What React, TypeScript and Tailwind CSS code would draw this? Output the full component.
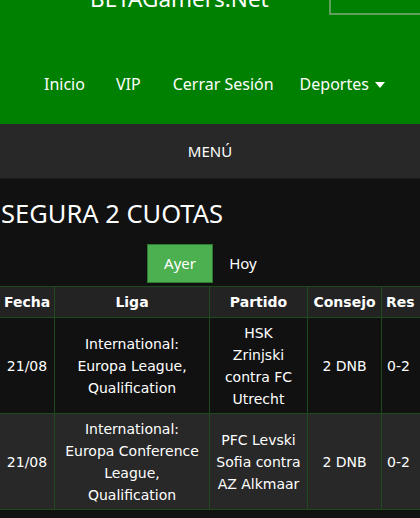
import React from "react";

const rows = [
  {
    fecha: "21/08",
    liga: ["International:", "Europa League,", "Qualification"],
    partido: ["HSK", "Zrinjski", "contra FC", "Utrecht"],
    consejo: "2 DNB",
    res: "0-2",
    bg: "bg-[#111111]",
  },
  {
    fecha: "21/08",
    liga: ["International:", "Europa Conference", "League,", "Qualification"],
    partido: ["PFC Levski", "Sofia contra", "AZ Alkmaar"],
    consejo: "2 DNB",
    res: "0-2",
    bg: "bg-[#282828]",
  },
];

export default function App() {
  const seg = { fontFamily: "'Noto Sans', 'Open Sans', sans-serif" };
  const tab = { fontFamily: "'DejaVu Sans', Verdana, sans-serif" };
  return (
    <div className="w-[420px] h-[518px] overflow-hidden bg-[#111111] text-white" style={seg}>
      <div className="bg-[#008000] h-[124px] flex flex-col">
        <div className="flex items-end h-[10px] overflow-visible">
          <div className="pl-[90px] text-[22.5px] leading-[30px] -mb-[4px] whitespace-nowrap">BETAGamers.Net</div>
          <div className="ml-auto w-[91px] h-[30px] -mb-[5px] border-2 border-[#5e9f5e] border-r-0" />
        </div>
        <div className="flex justify-start mt-[63px] text-[16px] leading-[22px] pl-[28px]">
          <span className="px-[16px]">Inicio</span>
          <span className="pl-[15px] pr-[19px]">VIP</span>
          <span className="px-[13px]">Cerrar Sesión</span>
          <span className="px-[13px] flex items-center">
            Deportes
            <svg width="10" height="6" viewBox="0 0 10 6" className="ml-[6px] mt-[2px]">
              <path d="M0 0 L10 0 L5 6 Z" fill="white" />
            </svg>
          </span>
        </div>
      </div>
      <div className="bg-[#282828] h-[55px] flex items-center justify-center text-[15px] border-b border-[#1c1c1c]">
        MENÚ
      </div>
      <div className="pt-[17px] text-[25.5px] leading-[34px] pl-[1px]">SEGURA 2 CUOTAS</div>
      <div className="flex justify-center mt-[14px] pl-[0px]">
        <div className="w-[66px] h-[39px] bg-[#4caf50] border border-[#2f7a33] flex items-center justify-center text-[15px]">
          Ayer
        </div>
        <div className="w-[60px] h-[39px] flex items-center justify-center text-[15px]">Hoy</div>
      </div>
      <div className="mt-[3px] w-[440px]" style={tab}>
        <div className="flex bg-[#232323] border-y border-[#1e4a1e] h-[32px] text-[14px] font-bold items-center">
          <div className="w-[55px] text-center border-r border-[#1e4a1e] h-full flex items-center justify-center">Fecha</div>
          <div className="w-[155px] border-r border-[#1e4a1e] h-full flex items-center justify-center">Liga</div>
          <div className="w-[98px] border-r border-[#1e4a1e] h-full flex items-center justify-center">Partido</div>
          <div className="w-[74px] border-r border-[#1e4a1e] h-full flex items-center justify-center">Consejo</div>
          <div className="w-[58px] h-full flex items-center pl-[4px]">Res</div>
        </div>
        {rows.map((r, i) => (
          <div key={i} className={`flex ${r.bg} border-b border-[#1e4a1e] h-[96px] text-[14px] leading-[22px]`}>
            <div className="w-[55px] border-r border-[#1e4a1e] flex items-center justify-center">{r.fecha}</div>
            <div className="w-[155px] border-r border-[#1e4a1e] flex flex-col items-center justify-center text-center">
              {r.liga.map((l) => (
                <span key={l}>{l}</span>
              ))}
            </div>
            <div className="w-[98px] border-r border-[#1e4a1e] flex flex-col items-center justify-center text-center">
              {r.partido.map((l) => (
                <span key={l}>{l}</span>
              ))}
            </div>
            <div className="w-[74px] border-r border-[#1e4a1e] flex items-center justify-center">{r.consejo}</div>
            <div className="w-[58px] flex items-center pl-[5px]">{r.res}</div>
          </div>
        ))}
      </div>
    </div>
  );
}
